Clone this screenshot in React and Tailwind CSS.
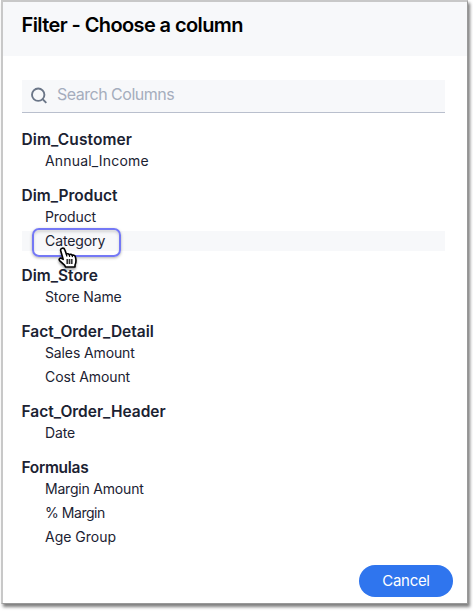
import { Fragment } from "react";

const groups = [
  { name: "Dim_Customer", track: "tracking-[0.1px]", items: [["Annual_Income", "tracking-[0.18px]"]] },
  { name: "Dim_Product", track: "tracking-[0px]", items: [["Product", "tracking-[-0.1px]"], ["Category", "tracking-[-0.1px]"]] },
  { name: "Dim_Store", track: "tracking-[0px]", items: [["Store Name", "tracking-[-0.12px]"]] },
  { name: "Fact_Order_Detail", track: "tracking-[0px]", items: [["Sales Amount", "tracking-[-0.12px]"], ["Cost Amount", "tracking-[-0.08px]"]] },
  { name: "Fact_Order_Header", track: "tracking-[0px]", items: [["Date", "tracking-[-0.1px]"]] },
  { name: "Formulas", track: "tracking-[-0.3px]", items: [["Margin Amount", "tracking-[-0.2px]"], ["% Margin", "tracking-[-0.45px]"], ["Age Group", "tracking-[0px]"]] },
];

function HandCursor() {
  return (
    <svg className="absolute left-[35px] top-[16px] h-[23px] w-[22px] drop-shadow-[0_2px_1px_rgba(0,0,0,0.35)]" viewBox="0 0 22 23" fill="none">
      <path d="M5.2 1.2C6.6.8 7.4 1.6 7.8 2.8L9.4 7.2C10.3 6.4 11.7 6.7 12.3 7.8C13.3 6.9 14.7 7.3 15.2 8.4C16.8 7.7 18 8.5 18.4 10C19.3 13.2 19.4 15.3 18 18V20H8.6L7.5 18.2L2.6 13.6C1.4 12.2 2.8 10.6 4.4 11.3L6.2 12.4L3.7 3.8C3.3 2.5 4 1.5 5.2 1.2Z" fill="white" stroke="black" strokeWidth="1.6" strokeLinejoin="round" />
      <path d="M9.3 7.3L10 9.5M12.3 8L12.7 9.8M15.2 8.6L15.5 10.2" stroke="black" strokeWidth="1.2" />
      <path d="M9.4 12H11.2V17H9.4ZM11.8 12H13.4V17H11.8ZM14 12H15.6V17H14Z" fill="#333" />
    </svg>
  );
}

export default function App() {
  return (
    <div className="h-[611px] w-[473px] overflow-hidden bg-white pl-[1px] font-['Inter','Liberation_Sans',sans-serif]">
      <div className="flex h-[604px] w-[467px] flex-col border-2 border-r border-b border-t-[#c8c8c8] border-l-[#c8c8c8] border-r-[#999] border-b-[#999] bg-white shadow-[2px_3px_3px_0px_rgba(0,0,0,0.5)]">
        <header className="h-[54px] shrink-0 bg-[#f7f8fa] pl-[18.5px] pt-[9px]">
          <h1 className="whitespace-nowrap text-[20px] font-semibold leading-[28px] tracking-[-0.6px] text-black">Filter - Choose a column</h1>
        </header>
        <div className="ml-[19px] mt-[24px] flex h-[33px] w-[423px] shrink-0 items-center border-b border-[#b9bfcd] bg-[#f7f8fa] pl-[9px]">
          <svg className="mt-[-1px] h-[17px] w-[17px]" viewBox="0 0 17 17" fill="none" stroke="#6b7688" strokeWidth="1.9">
            <circle cx="7.2" cy="7.7" r="6.2" />
            <path d="M11.6 12.2L15.3 15.9" />
          </svg>
          <span className="ml-[9px] mt-[-4px] whitespace-nowrap text-[16px] leading-[20px] tracking-[-0.5px] text-[#a5adbd]">Search Columns</span>
        </div>
        <main className="ml-[19px] mt-[14px] flex w-[423px] flex-1 flex-col gap-[8px] text-[#1b2232]">
          {groups.map((group) => (
            <section key={group.name}>
              <h2 className="-ml-[0.5px] h-[24px] whitespace-nowrap text-[15.5px] font-semibold leading-[25px]">
                <span className={group.track}>{group.name}</span>
              </h2>
              <div className="flex flex-col gap-[4px] pb-[4px]">
                {group.items.map(([name, track]) => (
                  <div key={name} className={`relative h-[20px] whitespace-nowrap pl-[23px] text-[14px] leading-[19px] ${name === "Category" ? "bg-[#f7f8fa]" : ""}`}>
                    <span className={track}>{name}</span>
                    {name === "Category" && (
                      <Fragment>
                        <div className="absolute left-[10px] top-[-3px] h-[29px] w-[89px] rounded-[7px] border-2 border-[#7478f5] shadow-[0_1px_3px_rgba(0,0,0,0.3),inset_0_2px_3px_rgba(0,0,0,0.15)]" />
                        <HandCursor />
                      </Fragment>
                    )}
                  </div>
                ))}
              </div>
            </section>
          ))}
        </main>
        <footer className="flex h-[38px] shrink-0 items-start justify-end pr-[14px]">
          <button className="h-[32px] w-[94px] rounded-full bg-[#2f75ee] pb-[1px] text-[15px] leading-[20px] tracking-[-0.3px] text-white">Cancel</button>
        </footer>
      </div>
    </div>
  );
}
